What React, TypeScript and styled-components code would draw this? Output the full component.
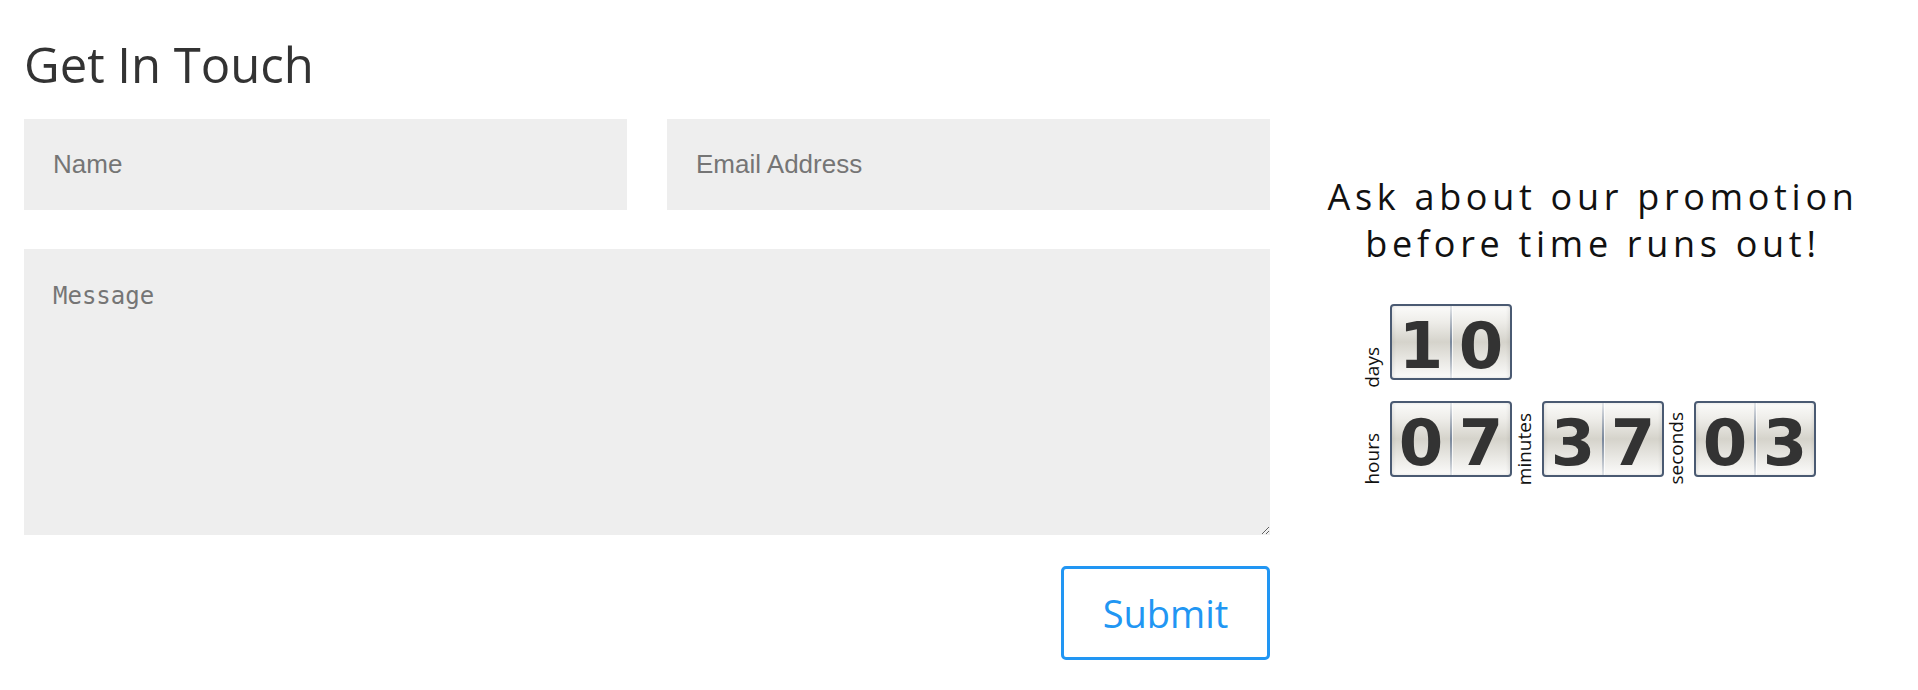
import { createGlobalStyle, styled } from 'styled-components';

const GlobalStyle = createGlobalStyle`
  html, body {
    margin: 0;
    padding: 0;
    background: #fff;
  }
  * {
    box-sizing: border-box;
  }
`;

const ACCENT = '#2196f3';

const timeLeft = [
  [{ label: 'days', value: '10' }],
  [
    { label: 'hours', value: '07' },
    { label: 'minutes', value: '37' },
    { label: 'seconds', value: '03' },
  ],
];

const App = () => {
  return (
    <PageStyled>
      <GlobalStyle />
      <div className='contact'>
        <Title>Get In Touch</Title>
        <FieldRow>
          <Field type='text' placeholder='Name' />
          <Field type='email' placeholder='Email Address' />
        </FieldRow>
        <MessageBox placeholder='Message' />
        <Actions>
          <SubmitButton type='button'>Submit</SubmitButton>
        </Actions>
      </div>
      <Promo>
        <PromoText>
          Ask about our promotion
          <br />
          before time runs out!
        </PromoText>
        <Countdown>
          {timeLeft.map((row, i) => (
            <CountRow key={i}>
              {row.map((u) => (
                <Unit key={u.label}>
                  <UnitLabel>{u.label}</UnitLabel>
                  <DigitBox>
                    <Digit>{u.value[0]}</Digit>
                    <Divider />
                    <Digit>{u.value[1]}</Digit>
                  </DigitBox>
                </Unit>
              ))}
            </CountRow>
          ))}
        </Countdown>
      </Promo>
    </PageStyled>
  );
};

export default App;

const PageStyled = styled.div`
  display: flex;
  padding: 34px 2px 0 24px;
  .contact {
    width: 1246px;
    flex-shrink: 0;
  }
`;

const Title = styled.h2`
  margin: 0 0 25px;
  font-family: 'Open Sans', sans-serif;
  font-weight: 400;
  font-size: 49px;
  line-height: 60px;
  color: #333;
`;

const FieldRow = styled.div`
  display: grid;
  grid-template-columns: 1fr 1fr;
  gap: 40px;
  margin-bottom: 39px;
`;

const Field = styled.input`
  height: 91px;
  width: 100%;
  border: 0;
  outline: none;
  background: #eeeeee;
  padding: 0 29px;
  font-family: 'Liberation Sans', Arial, sans-serif;
  font-size: 26px;
  color: #333;
  &::placeholder {
    color: #757575;
  }
`;

const MessageBox = styled.textarea`
  display: block;
  width: 100%;
  height: 286px;
  border: 0;
  outline: none;
  background: #eeeeee;
  padding: 33px 29px;
  font-family: 'DejaVu Sans Mono', monospace;
  font-size: 24px;
  color: #333;
  &::placeholder {
    color: #757575;
  }
`;

const Actions = styled.div`
  display: flex;
  justify-content: flex-end;
  margin-top: 31px;
`;

const SubmitButton = styled.button`
  width: 209px;
  height: 94px;
  background: #fff;
  border: 3px solid ${ACCENT};
  border-radius: 5px;
  color: ${ACCENT};
  font-family: 'Open Sans', sans-serif;
  font-size: 38px;
  cursor: pointer;
`;

const Promo = styled.div`
  flex: 1;
  padding-top: 139px;
`;

const PromoText = styled.p`
  margin: 0;
  text-align: center;
  font-family: 'Open Sans', sans-serif;
  font-size: 36px;
  line-height: 47px;
  letter-spacing: 4.7px;
  color: #111;
`;

const Countdown = styled.div`
  display: flex;
  flex-direction: column;
  gap: 21px;
  margin-top: 37px;
  padding-left: 90px;
`;

const CountRow = styled.div`
  display: flex;
`;

const Unit = styled.div`
  display: flex;
  align-items: flex-end;
`;

const UnitLabel = styled.span`
  writing-mode: vertical-rl;
  transform: rotate(180deg);
  width: 24px;
  margin-right: 6px;
  margin-bottom: -8px;
  font-family: 'Open Sans', sans-serif;
  font-size: 19px;
  line-height: 24px;
  color: #111;
`;

const DigitBox = styled.div`
  display: flex;
  width: 122px;
  height: 76px;
  border: 2px solid #4a5a72;
  border-radius: 4px;
  background: linear-gradient(
    to bottom,
    #fbfbfa 0%,
    #eeede9 22%,
    #d5d3cb 50%,
    #ebeae6 78%,
    #fbfbfa 100%
  );
  box-shadow: inset 2px 0 3px rgba(0, 0, 0, 0.06), inset -2px 0 3px rgba(0, 0, 0, 0.06);
`;

const Digit = styled.span`
  flex: 1;
  height: 72px;
  padding-top: 5px;
  text-align: center;
  font-family: 'DejaVu Sans', Verdana, sans-serif;
  font-weight: 700;
  font-size: 64px;
  line-height: 70px;
  color: #333;
`;

const Divider = styled.span`
  width: 2px;
  background: linear-gradient(
    to bottom,
    rgba(100, 120, 150, 0.15),
    rgba(90, 110, 140, 0.75) 50%,
    rgba(100, 120, 150, 0.15)
  );
  box-shadow: 1px 0 0 rgba(255, 255, 255, 0.7);
`;
